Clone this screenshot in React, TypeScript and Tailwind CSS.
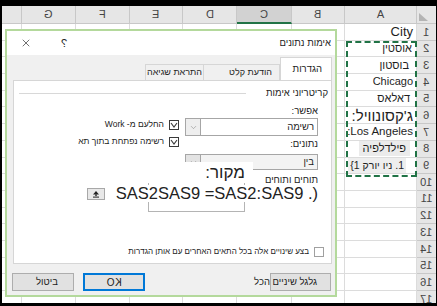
import React from 'react';
import { X, ChevronDown } from 'lucide-react';

const font = 'font-["Liberation_Sans","DejaVu_Sans",sans-serif]';
const letters = ['', 'G', 'F', 'E', 'D', 'C', 'B', 'A'];
const rowNums = Array.from({ length: 17 }, (_, i) => i + 1);

function Mirror({ children }: { children: React.ReactNode }) {
  return <span className="inline-block scale-x-[-1]">{children}</span>;
}

function CheckBox({ checked }: { checked?: boolean }) {
  return (
    <svg width="10" height="10" viewBox="0 0 10 10" className="shrink-0">
      <rect x="0.5" y="0.5" width="9" height="9" fill="white" stroke={checked ? '#3a3a3a' : '#a0a0a0'} />
      {checked && <polyline points="2,3 5,7 8,3" fill="none" stroke="#3a3a3a" strokeWidth="1.1" />}
    </svg>
  );
}

// column A contents, row by row
function CellA({ n }: { n: number }) {
  switch (n) {
    case 1:
      return <span className="text-[13px] leading-none pr-[3px]">City</span>;
    case 2:
      return <span dir="rtl" className="text-[11px] leading-none pr-[4px] bg-white">אוסטין</span>;
    case 3:
      return <span dir="rtl" className="text-[11px] leading-none pr-[7px]">בוסטון</span>;
    case 4:
      return <span className="text-[11px] leading-none pr-[3px]">Chicago</span>;
    case 5:
      return <span dir="rtl" className="text-[11px] leading-none pr-[6px]">דאלאס</span>;
    case 6:
      return <span dir="rtl" className="text-[15px] leading-none pr-[3px] whitespace-nowrap">ג'קסונוויל:</span>;
    case 7:
      return <span dir="rtl" className="text-[11.5px] leading-none pr-[3px] whitespace-nowrap">Los Angeles:</span>;
    case 8:
      return (
        <span dir="rtl" className="text-[11px] leading-none mr-[6px] px-[4px] py-[2px] bg-[#ebebeb]">פילדלפיה</span>
      );
    case 9:
      return (
        <span className="text-[10.5px] leading-none mr-[10px] px-[2px] py-[2px] bg-[#eeeeee] whitespace-nowrap">
          {'{1 '}<span dir="rtl">ניו יורק</span>{' .1'}
        </span>
      );
    default:
      return null;
  }
}

function Sheet() {
  return (
    <div className="grid grid-cols-[20px_54px_54px_53px_54px_55px_53px_72px_19px] bg-white">
      {letters.map((l, i) => (
        <div
          key={'h' + i}
          className={`h-[18px] flex items-center justify-center text-[11px] text-[#444] border-r border-b border-[#c8c8c8] ${
            l === 'C' ? 'bg-[#d2d2d2] border-b-2 border-b-[#217346]' : 'bg-[#e6e6e6]'
          }`}
        >
          <Mirror>{l}</Mirror>
        </div>
      ))}
      <div className="h-[18px] bg-[#e6e6e6] border-b border-[#c8c8c8]">
        <svg width="19" height="18" viewBox="0 0 19 18">
          <polygon points="2,7 2,15 11,15" fill="#b4b4b4" />
        </svg>
      </div>
      {rowNums.map((n) => (
        <React.Fragment key={n}>
          {letters.slice(0, 7).map((l, i) => (
            <div key={i} className="h-[16.7px] border-r border-b border-[#dcdcdc]" />
          ))}
          <div className="h-[16.7px] border-r border-b border-[#dcdcdc] flex items-center justify-end overflow-visible text-[#1e1e1e]">
            <CellA n={n} />
          </div>
          <div className="h-[16.7px] bg-[#e6e6e6] border-b border-[#c8c8c8] flex items-center justify-center text-[11px] text-[#444]">
            <Mirror>{n}</Mirror>
          </div>
        </React.Fragment>
      ))}
    </div>
  );
}

function Select({ value, disabled }: { value: string; disabled?: boolean }) {
  return (
    <div
      className={`flex items-stretch border border-[#a6a6a6] ${disabled ? 'bg-[#f3f3f3] h-[16px]' : 'bg-white h-[18px]'}`}
    >
      <div className={`w-[15px] flex items-center justify-center border-r border-[#a6a6a6] ${disabled ? 'bg-[#e3e3e3]' : 'bg-[#eeeeee]'}`}>
        <ChevronDown size={9} strokeWidth={1.3} className="text-[#777]" />
      </div>
      <div dir="rtl" className="flex-1 flex items-center pr-[3px] text-[9.5px] text-[#222]">
        {value}
      </div>
    </div>
  );
}

function Dialog() {
  return (
    <div className={`absolute left-[5px] top-[29px] w-[332px] h-[268px] border-2 border-[#b4d99c] bg-[#f0f0f0] flex flex-col ${font}`}>
      {/* title bar */}
      <div className="h-[24px] bg-white flex items-center text-[#222]">
        <X size={12} strokeWidth={1.3} className="ml-[13px]" />
        <span className="ml-[29px] text-[11px]">
          <Mirror>?</Mirror>
        </span>
        <span dir="rtl" className="ml-auto mr-[4px] text-[9.5px]">אימות נתונים</span>
      </div>

      {/* tabs */}
      <div className="flex justify-end items-end mt-[2px] mr-[3px] h-[24px] -mb-px relative">
        <div dir="rtl" className="w-[58px] h-[17px] border border-[#d6d6d6] border-r-0 flex items-center justify-center text-[9px] text-[#222] whitespace-nowrap">
          התראת שגיאה
        </div>
        <div dir="rtl" className="w-[77px] h-[17px] border border-[#d6d6d6] flex items-center pr-[7px] text-[9px] text-[#222]">
          הודעת קלט
        </div>
        <div dir="rtl" className="w-[52px] h-[24px] bg-white border border-b-0 border-[#d6d6d6] flex items-center pr-[9px] text-[9.5px] text-[#222]">
          הגדרות
        </div>
      </div>

      {/* panel */}
      <div className="relative ml-[6px] mr-[3px] h-[184px] bg-white border border-[#d6d6d6] flex flex-col text-[#222]">
        <div className="mt-[7px] h-[11px] flex items-center">
          <div className="ml-[5px] w-[227px] h-px bg-[#d8d8d8]" />
          <span dir="rtl" className="ml-auto mr-[3px] text-[9.5px]">קריטריוני אימות</span>
        </div>

        <div className="mt-[6px] flex justify-end pr-[13px]">
          <div className="mr-[6px] pt-[15px] flex flex-col items-end gap-[8px]">
            <div className="flex items-center gap-[5px] h-[9px]">
              <span dir="rtl" className="text-[8.5px] whitespace-nowrap">החלעם מ- Work</span>
              <CheckBox checked />
            </div>
            <div className="flex items-center gap-[5px] h-[9px]">
              <span dir="rtl" className="text-[8.5px] whitespace-nowrap">רשימה נפתחת בתוך תא</span>
              <CheckBox checked />
            </div>
          </div>
          <div className="w-[133px] flex flex-col">
            <div dir="rtl" className="h-[12px] text-[9.5px] leading-[12px]">אפשר:</div>
            <div className="mt-[1px]">
              <Select value="רשימה" />
            </div>
            <div dir="rtl" className="mt-[2px] h-[12px] text-[9.5px] leading-[12px]">נתונים:</div>
            <div className="mt-[4px]">
              <Select value="בין" disabled />
            </div>
          </div>
        </div>

        <div className="mt-[-8px] flex justify-end items-end pr-[13px]">
          <div dir="rtl" className="relative w-[68px] h-[21px] bg-white flex items-center pr-[8px] text-[17px] leading-none">
            מקור:
          </div>
          <div dir="rtl" className="ml-[3px] w-[62px] h-[11px] mb-[-2px] text-[9.5px] leading-[11px] whitespace-nowrap">
            תוחים ותוחים
          </div>
        </div>

        <div className="absolute left-[134px] top-[102px] w-[97px] h-[29px] border-l border-r border-b border-[#b4b4b4] pointer-events-none" />
        <div className="relative mt-[1px] h-[19px] flex items-center justify-end pr-[13px]">
          <div className="w-[18px] h-[12px] mr-[11px] bg-[#e8e8e8] border border-[#a8a8a8] flex items-center justify-center">
            <svg width="8" height="8" viewBox="0 0 8 8">
              <polygon points="4,1 1,4.5 7,4.5" fill="#222" />
              <rect x="3.3" y="4.3" width="1.4" height="1.8" fill="#222" />
              <rect x="1" y="6.6" width="6" height="1" fill="#222" />
            </svg>
          </div>
          <span className="text-[16.5px] leading-none whitespace-nowrap bg-white">SAS2SAS9 =SAS2:SAS9 .)</span>
        </div>

        <div className="mt-[44px] h-[9px] flex justify-end items-center gap-[5px] pr-[7px]">
          <span dir="rtl" className="text-[8px] whitespace-nowrap">בצע שינויים אלה בכל התאים האחרים עם אותן הגדרות</span>
          <CheckBox />
        </div>
      </div>

      {/* buttons */}
      <div className="mt-[9px] h-[18px] ml-[5px] mr-[4px] flex items-center text-[9.5px] text-[#222]">
        <div dir="rtl" className="w-[62px] h-[18px] bg-[#e1e1e1] border border-[#adadad] flex items-center justify-center pl-[8px]">
          ביטול
        </div>
        <div className="ml-[9px] w-[62px] h-[18px] bg-[#e1e1e1] border-2 border-[#0078d7] flex items-center justify-center text-[10px]">
          O<Mirror>K</Mirror>
        </div>
        <div className="ml-auto w-[61px] h-[18px] bg-[#e1e1e1] border border-[#adadad] flex items-center justify-end pr-[13px] whitespace-nowrap">
          <span dir="rtl">גלגל שיניים הכל</span>
        </div>
      </div>
    </div>
  );
}

export default function App() {
  return (
    <div className={`relative w-[437px] h-[306px] bg-black pt-[6px] pl-[2px] pr-[1px] pb-[3px] overflow-hidden ${font}`}>
      <div className="h-full overflow-hidden bg-white">
        <Sheet />
      </div>
      {/* copy marquee around the list in column A */}
      <div className="absolute left-[346px] top-[41px] w-[71px] h-[136px] border-2 border-dashed border-[#217346] pointer-events-none" />
      <Dialog />
    </div>
  );
}
